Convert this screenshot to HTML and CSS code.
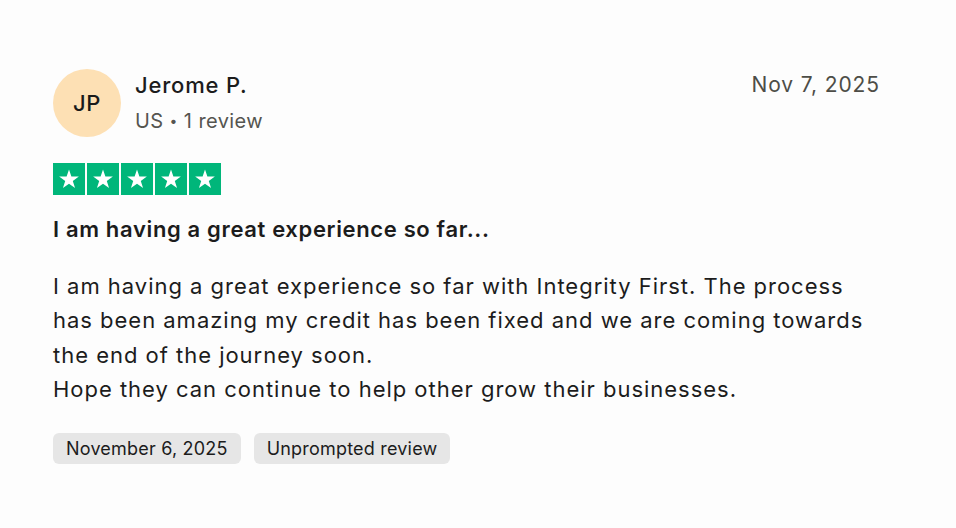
FILE: index.html
```html
<!DOCTYPE html>
<html lang="en">
<head>
<meta charset="utf-8">
<link rel="stylesheet" href="styles.css">
</head>
<body>
<article class="review">
  <header class="head">
    <div class="consumer">
      <div class="avatar">JP</div>
      <div class="info">
        <div class="name">Jerome P.</div>
        <div class="meta">US <span class="dot">•</span> 1 review</div>
      </div>
    </div>
    <time class="date">Nov 7, 2025</time>
  </header>
  <div class="stars">
    <span class="star"><svg viewBox="0 0 24 24"><path d="M12 3.2l2.2 6.5h6.9l-5.6 4.1 2.1 6.6L12 16.3l-5.6 4.1 2.1-6.6-5.6-4.1h6.9z" fill="#fff"/></svg></span>
    <span class="star"><svg viewBox="0 0 24 24"><path d="M12 3.2l2.2 6.5h6.9l-5.6 4.1 2.1 6.6L12 16.3l-5.6 4.1 2.1-6.6-5.6-4.1h6.9z" fill="#fff"/></svg></span>
    <span class="star"><svg viewBox="0 0 24 24"><path d="M12 3.2l2.2 6.5h6.9l-5.6 4.1 2.1 6.6L12 16.3l-5.6 4.1 2.1-6.6-5.6-4.1h6.9z" fill="#fff"/></svg></span>
    <span class="star"><svg viewBox="0 0 24 24"><path d="M12 3.2l2.2 6.5h6.9l-5.6 4.1 2.1 6.6L12 16.3l-5.6 4.1 2.1-6.6-5.6-4.1h6.9z" fill="#fff"/></svg></span>
    <span class="star"><svg viewBox="0 0 24 24"><path d="M12 3.2l2.2 6.5h6.9l-5.6 4.1 2.1 6.6L12 16.3l-5.6 4.1 2.1-6.6-5.6-4.1h6.9z" fill="#fff"/></svg></span>
  </div>
  <h2 class="title">I am having a great experience so far...</h2>
  <p class="body">I am having a great experience so far with Integrity First. The process has been amazing my credit has been fixed and we are coming towards the end of the journey soon.<br>Hope they can continue to help other grow their businesses.</p>
  <div class="tags">
    <span class="tag">November 6, 2025</span>
    <span class="tag">Unprompted review</span>
  </div>
</article>
</body>
</html>
```
FILE: styles.css
```css
html, body {
  margin: 0;
  background: #fdfdfd;
}
body {
  font-family: Inter, "Noto Sans", sans-serif;
  color: #1c1c1c;
  padding: 69px 0 0 53px;
}
.review {
  width: 827px;
}
.head {
  display: flex;
  justify-content: space-between;
  align-items: flex-start;
}
.consumer {
  display: flex;
  align-items: flex-start;
  gap: 14px;
}
.avatar {
  width: 68px;
  height: 68px;
  border-radius: 50%;
  background: #fde0b4;
  display: flex;
  align-items: center;
  justify-content: center;
  font-size: 22px;
  font-weight: 500;
  letter-spacing: 0.5px;
  color: #1a1a1a;
}
.info {
  display: flex;
  flex-direction: column;
}
.name {
  font-size: 22px;
  font-weight: 500;
  line-height: 32px;
  letter-spacing: 0.8px;
}
.meta {
  font-size: 20px;
  color: #555550;
  line-height: 40px;
  letter-spacing: 0.4px;
}
.dot {
  font-size: 14px;
  vertical-align: 2px;
}
.date {
  font-size: 21px;
  color: #4d4d47;
  line-height: 32px;
  letter-spacing: 0.9px;
}
.stars {
  display: flex;
  gap: 2px;
  margin-top: 22px;
}
.star {
  width: 32px;
  height: 32px;
  background: #00b67a;
  display: flex;
  align-items: center;
  justify-content: center;
}
.star svg {
  width: 26px;
  height: 26px;
}
.title {
  margin: 19px 0 0;
  font-size: 22px;
  font-weight: 600;
  line-height: 30px;
  letter-spacing: 0.65px;
}
.body {
  margin: 25px 0 0;
  font-size: 22px;
  line-height: 34.3px;
  letter-spacing: 0.98px;
}
.tags {
  display: flex;
  gap: 13px;
  margin-top: 27px;
}
.tag {
  background: #e6e6e6;
  border-radius: 6px;
  padding: 0 13px;
  height: 31px;
  line-height: 31px;
  font-size: 18px;
  letter-spacing: 0.2px;
}
```
